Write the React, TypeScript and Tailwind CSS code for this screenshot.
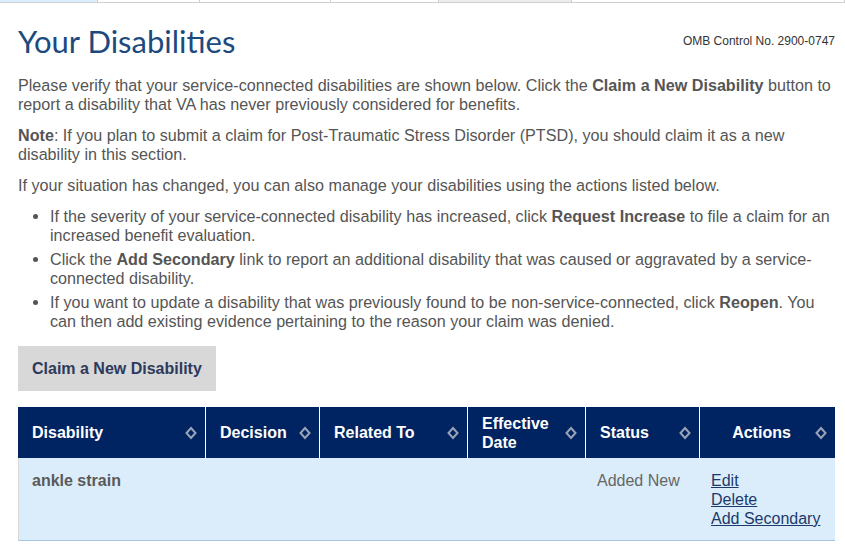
import React from "react";

const SortIcon = () => (
  <svg width="12" height="14" viewBox="0 0 12 14" className="shrink-0">
    <path d="M6 2 L10.5 7 L6 12 L1.5 7 Z" fill="none" stroke="#9aa3b5" strokeWidth="2" />
  </svg>
);

type Col = { label: React.ReactNode; width: string; center?: boolean };

const columns: Col[] = [
  { label: "Disability", width: "w-[188px]" },
  { label: "Decision", width: "w-[114px]" },
  { label: "Related To", width: "w-[148px]" },
  { label: (<>Effective<br />Date</>), width: "w-[118px]" },
  { label: "Status", width: "w-[114px]" },
  { label: "Actions", width: "flex-1", center: true },
];

const tabs = [
  { w: "w-[98px]", bg: "bg-[#dbeefb]" },
  { w: "w-[102px]", bg: "bg-white" },
  { w: "w-[131px]", bg: "bg-white" },
  { w: "w-[108px]", bg: "bg-white" },
  { w: "w-[133px]", bg: "bg-[#ececec]" },
  { w: "flex-1", bg: "bg-white" },
];

export default function App() {
  return (
    <div className="w-[845px] h-[544px] overflow-hidden bg-white font-['Liberation_Sans',Arial,sans-serif] text-[#555]">
      {/* cut-off tab strip */}
      <div className="flex h-[3px] border-b border-[#cfcfcf]">
        {tabs.map((t, i) => (
          <div key={i} className={`${t.w} ${t.bg} border-r border-[#cfcfcf]`} />
        ))}
      </div>

      <div className="pl-[18px] pr-[10px]">
        <div className="flex items-end justify-between pt-[19px]">
          <h1 className="font-['Lato',sans-serif] text-[31px] leading-[38px] text-[#1c4a7e]">
            Your Disabilities
          </h1>
          <span className="text-[12px] text-[#333] mb-[10px]">OMB Control No. 2900-0747</span>
        </div>

        <div className="mt-[16px] text-[16.15px] leading-[19px]">
          <p>
            Please verify that your service-connected disabilities are shown below. Click the{" "}
            <b>Claim a New Disability</b> button to report a disability that VA has never previously
            considered for benefits.
          </p>
          <p className="mt-[12px]">
            <b>Note</b>: If you plan to submit a claim for Post-Traumatic Stress Disorder (PTSD), you
            should claim it as a new disability in this section.
          </p>
          <p className="mt-[12px]">
            If your situation has changed, you can also manage your disabilities using the actions
            listed below.
          </p>
          <ul className="mt-[12px] pl-[32px] list-disc">
            <li>
              If the severity of your service-connected disability has increased, click{" "}
              <b>Request Increase</b> to file a claim for an increased benefit evaluation.
            </li>
            <li className="mt-[5px]">
              Click the <b>Add Secondary</b> link to report an additional disability that was caused
              or aggravated by a service-connected disability.
            </li>
            <li className="mt-[5px]">
              If you want to update a disability that was previously found to be non-service-connected,
              click <b>Reopen</b>. You can then add existing evidence pertaining to the reason your
              claim was denied.
            </li>
          </ul>
        </div>

        <button className="mt-[15px] h-[45px] px-[14px] bg-[#d8d8d8] text-[16px] font-bold text-[#2d3a5c]">
          Claim a New Disability
        </button>

        <div className="mt-[16px] w-[817px]">
          <div className="flex h-[51px] bg-[#002462] text-white text-[16px] font-bold leading-[19px]">
            {columns.map((c, i) => (
              <div
                key={i}
                className={`${c.width} flex items-center pl-[14px] ${c.center ? "pr-[8px]" : "pr-[8px]"} ${i < columns.length - 1 ? "border-r border-white" : ""}`}
              >
                <span className={c.center ? "flex-1 text-center pr-[6px]" : "flex-1"}>{c.label}</span>
                <SortIcon />
              </div>
            ))}
          </div>
          <div className="flex h-[83px] bg-[#dbedfa] border-b border-[#a3c4e4] border-l border-l-[#d8d8d8] text-[16px] leading-[19px]">
            <div className="w-[187px] pl-[13px] pt-[13px] font-bold text-[#5a5a5a]">ankle strain</div>
            <div className="w-[114px]" />
            <div className="w-[148px]" />
            <div className="w-[118px]" />
            <div className="w-[114px] pl-[11px] pt-[13px] text-[#666]">Added New</div>
            <div className="flex-1 pl-[11px] pt-[13px] flex flex-col items-start text-[#1b3a6b]">
              <a className="underline" href="#">Edit</a>
              <a className="underline" href="#">Delete</a>
              <a className="underline" href="#">Add Secondary</a>
            </div>
          </div>
        </div>
      </div>
    </div>
  );
}
